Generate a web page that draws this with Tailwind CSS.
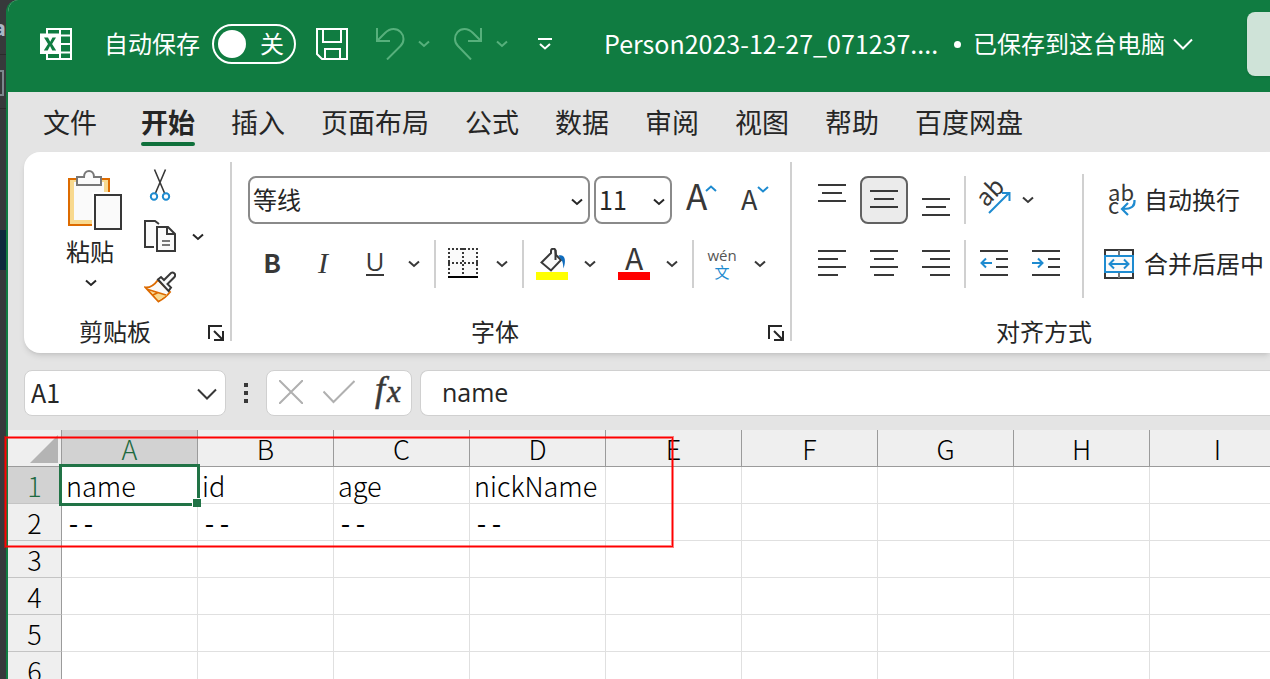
<!DOCTYPE html>
<html lang="zh-CN">
<head>
<meta charset="utf-8">
<title>Person2023-12-27 - Excel</title>
<script src="https://cdn.jsdelivr.net/npm/@tailwindcss/browser@4"></script>
</head>
<body class="relative flex h-screen overflow-hidden bg-[#37393b] font-['Open_Sans','Noto_Sans_CJK_SC',sans-serif] text-[#262626]">

<svg class="hidden" aria-hidden="true">
  <symbol id="chev" viewBox="0 0 12 8"><path d="M1 1.5 L6 6 L11 1.5" fill="none" stroke="currentColor" stroke-width="2"/></symbol>
  <symbol id="launch" viewBox="0 0 16 16"><path d="M1 14V1H14M6 6L14 14M15 6V15H6" fill="none" stroke="currentColor" stroke-width="2"/></symbol>
</svg>

<!-- Window behind -->
<aside class="w-[6px] shrink-0 overflow-hidden" aria-hidden="true">
  <div class="flex h-[54px] items-center justify-end text-[22px] font-bold text-[#a9b7c6]">a</div>
  <div class="h-px bg-[#2b2b2b]"></div>
  <div class="mt-[15px] h-[26px] w-[4px] border-2 border-l-0 border-[#7c878d]"></div>
  <div class="mt-3 h-px bg-[#2b2b2b]"></div>
  <div class="mt-[121px] h-10 bg-[#0d293e]"></div>
</aside>

<main class="flex min-w-0 flex-1 flex-col overflow-hidden rounded-tl-xl border-l-2 border-[#107c41] bg-[#e4e4e4]">

  <header class="flex h-[92px] shrink-0 items-center bg-[#107c41] pb-1 pl-8 text-[24px] text-white">
    <svg class="size-8 shrink-0" viewBox="0 0 32 32"><path d="M7 6V1H31V31H7V26M20 1V31M20 7.500H31M20 16H31M20 24.500H31M7 7.500H20M7 24.500H20" fill="none" stroke="#fff" stroke-width="2"/><path d="M0 5.500H20V26H0Z" fill="#fff"/><path d="M4 9.500H8L10.200 13.800L12.500 9.500H16L12.100 16L16.200 22.500H12.300L10 18L7.700 22.500H3.800L8 16Z" fill="#107c41"/></svg>
    <label for="autosave" class="ml-8 shrink-0 whitespace-nowrap">自动保存</label>
    <button id="autosave" role="switch" aria-checked="false" class="ml-3 flex h-10 w-[84px] shrink-0 items-center justify-between rounded-full border-2 border-white pr-[10px] pl-1"><span class="size-7 rounded-full bg-white"></span><span>关</span></button>
    <button aria-label="保存" class="ml-5 shrink-0"><svg class="size-8" viewBox="0 0 32 32" fill="none" stroke="#fff" stroke-width="2"><path d="M1 1H31V31H6L1 26ZM7 1V14H25V1M9 31V21H24V31"/></svg></button>
    <button aria-label="撤消" class="ml-7 shrink-0 text-[#57b07c]"><svg class="h-8 w-[29px]" viewBox="0 0 29 32" fill="none" stroke="currentColor" stroke-width="2"><path d="M1 0V13H14M1 13L9 5C12 2 15 1 17.500 1C23.500 1 27.500 6 27.500 11C27.500 14 26.500 16 24.500 18L11 31.500"/></svg></button>
    <button aria-label="撤消列表" class="ml-[13px] shrink-0 text-[#57b07c]"><svg class="h-2 w-3"><use href="#chev"/></svg></button>
    <button aria-label="恢复" class="ml-6 shrink-0 text-[#57b07c]"><svg class="h-8 w-[29px]" viewBox="0 0 29 32" fill="none" stroke="currentColor" stroke-width="2"><path d="M27 0V13H14M27 13L19 5C16 2 13 1 10.500 1C4.500 1 1 6 1 11C1 14 2 16 4 18L17 31.500"/></svg></button>
    <button aria-label="恢复列表" class="ml-[13px] shrink-0 text-[#57b07c]"><svg class="h-2 w-3"><use href="#chev"/></svg></button>
    <button aria-label="自定义快速访问工具栏" class="ml-[30px] shrink-0"><svg class="h-[14px] w-[14px]" viewBox="0 0 14 14" fill="none" stroke="#fff" stroke-width="2"><path d="M0 2H14M2 7L7 11.500L12 7"/></svg></button>
    <button class="ml-[52px] flex shrink-0 items-center whitespace-nowrap"><span class="w-[350px] pb-[2px] text-left font-['Noto_Sans_CJK_SC',sans-serif] text-[25px] leading-9">Person2023-12-27_071237....</span><span class="mr-3 size-[7px] rounded-full bg-white"></span><span>已保存到这台电脑</span><svg class="ml-2 h-3 w-5" viewBox="0 0 20 12" fill="none" stroke="#fff" stroke-width="2"><path d="M1 1.500L10 10.500L19 1.500"/></svg></button>
    <button aria-label="搜索" class="ml-auto h-16 w-[23px] shrink-0 rounded-l-lg bg-[#cfe3d8] shadow-sm"></button>
  </header>

  <nav class="flex h-[60px] shrink-0 items-center gap-9 pt-[2px] pl-[35px] text-[27px] whitespace-nowrap">
    <a href="#" class="mr-2">文件</a>
    <a href="#" aria-current="page" class="relative font-bold">开始<span class="absolute -bottom-[3px] left-0 h-1 w-full rounded-full bg-[#0f703b]"></span></a>
    <a href="#">插入</a><a href="#">页面布局</a><a href="#">公式</a><a href="#">数据</a><a href="#">审阅</a><a href="#">视图</a><a href="#">帮助</a><a href="#">百度网盘</a>
  </nav>

  <div class="ml-4 flex shrink-0 overflow-hidden rounded-l-2xl bg-white pb-[6px] text-[24px] text-[#262626] shadow-md">
    <!-- Clipboard -->
    <section class="flex w-[206px] shrink-0 flex-col">
      <div class="flex h-[165px] pl-9">
        <button class="flex w-[62px] flex-col items-center pt-4">
          <svg class="h-16 w-[62px] shrink-0" viewBox="0 0 62 64"><path d="M9 11H49V57H9Z" fill="#f8d98f" stroke="#dd6b00" stroke-width="2"/><path d="M14 14H44V52H14Z" fill="#fafafa"/><path d="M17 9H24C24 1 34 1 34 9H41V17H17Z" fill="#fafafa" stroke="#777" stroke-width="2"/><path d="M32 24H62V64H32Z" fill="#fff"/><path d="M35 27H61V61H35Z" fill="#fafafa" stroke="#383838" stroke-width="2"/></svg>
          <span class="pr-[2px] leading-10">粘贴</span>
          <svg class="mt-[7px] h-2 w-3 shrink-0"><use href="#chev"/></svg>
        </button>
        <div class="ml-[22px] flex flex-col pt-[7px]">
          <button aria-label="剪切" class="flex h-[51px] items-center"><svg class="h-8 w-8" viewBox="0 0 32 32" fill="none"><path d="M10.500 0.500L20.500 24M21.500 0.500L11.500 24" stroke="#383838" stroke-width="1.600"/><circle cx="10" cy="27.500" r="3.200" stroke="#1e8bd0" stroke-width="2"/><circle cx="22" cy="27.500" r="3.200" stroke="#1e8bd0" stroke-width="2"/></svg></button>
          <button aria-label="复制" class="flex h-[51px] items-center"><svg class="h-8 w-8" viewBox="0 0 32 32" fill="#fafafa" stroke="#383838" stroke-width="2"><path d="M10 27H1V1H11L15 4"/><path d="M13 7H24L31 14V31H13Z"/><path d="M23 7V14H31" fill="none"/><path d="M18 21H26M18 25H26" stroke="#777"/></svg></button>
          <button aria-label="格式刷" class="flex h-[51px] items-center"><svg class="h-8 w-8" viewBox="0 0 32 32"><path d="M1.500 16.500C7 17 11 13 14 9L26 21C23 25 19 28 14.500 30.500Z" fill="#fafafa" stroke="#dd6b00" stroke-width="2"/><path d="M6 20L23 24L14.500 29.500Z" fill="#f8d98f"/><path d="M4 18.500L22 24M9 24L14 21.500" stroke="#dd6b00" stroke-width="1.800"/><path d="M14 8.500L17 6L20 9L27 2C29 0.500 32.500 3 30.500 6L23.500 13L27 16.500L24.500 20Z" fill="#fafafa" stroke="#383838" stroke-width="2"/></svg></button>
        </div>
        <button aria-label="复制选项" class="mt-[67px] ml-4 flex h-9 items-center"><svg class="h-2 w-3"><use href="#chev"/></svg></button>
      </div>
      <div class="flex h-[30px] items-center"><h2 class="flex-1 pl-2 text-center">剪贴板</h2><button aria-label="剪贴板选项" class="flex w-8 justify-center pt-[2px] pl-1"><svg class="size-4"><use href="#launch"/></svg></button></div>
    </section>
    <div class="mt-[10px] h-[179px] w-[2px] shrink-0 bg-[#d0d0d0]"></div>

    <!-- Font -->
    <section class="flex w-[558px] shrink-0 flex-col">
      <div class="flex h-[165px] flex-col gap-4 pt-6 pl-4">
        <div class="flex h-12">
          <div class="relative w-[342px]"><select aria-label="字体" class="h-12 w-full appearance-none rounded-lg border-2 border-[#8a8a8a] bg-white pl-[3px]"><option>等线</option></select><svg class="pointer-events-none absolute top-[22px] right-[7px] h-2 w-3"><use href="#chev"/></svg></div>
          <div class="relative ml-1 w-[78px]"><select aria-label="字号" class="h-12 w-full appearance-none rounded-lg border-2 border-[#8a8a8a] bg-white pl-[3px] font-['Noto_Sans_CJK_SC',sans-serif] text-[25px]"><option>11</option></select><svg class="pointer-events-none absolute top-[22px] right-[7px] h-2 w-3"><use href="#chev"/></svg></div>
          <button aria-label="增大字号" class="ml-3"><svg class="h-12 w-9 overflow-visible" viewBox="0 0 36 48"><text x="2" y="34" font-size="35" font-family="Noto Sans CJK SC" fill="#383838">A</text><path d="M22 15L27 10.500L32 15" fill="none" stroke="#1e8bd0" stroke-width="2"/></svg></button>
          <button aria-label="减小字号" class="ml-[18px]"><svg class="h-12 w-9 overflow-visible" viewBox="0 0 36 48"><text x="3" y="34" font-size="27" font-family="Noto Sans CJK SC" fill="#383838">A</text><path d="M20 11L25 15.500L30 11" fill="none" stroke="#1e8bd0" stroke-width="2"/></svg></button>
        </div>
        <div class="flex h-12 items-center text-[#383838]">
          <button class="h-12 w-12 pb-1 font-['Noto_Sans_CJK_SC',sans-serif] text-[26px] leading-[44px] font-bold">B</button>
          <button class="h-12 w-[54px] pb-1 font-['Liberation_Serif',serif] text-[30px] italic">I</button>
          <button aria-label="下划线" class="flex w-[50px] justify-center"><svg class="h-12 w-6 overflow-visible" viewBox="0 0 24 48"><text x="12" y="31" font-size="26" text-anchor="middle" fill="#383838">U</text><path d="M3 35H21" stroke="#383838" stroke-width="2"/></svg></button>
          <button aria-label="下划线选项" class="flex h-12 w-7 items-center justify-center"><svg class="h-2 w-3"><use href="#chev"/></svg></button>
          <div class="ml-[6px] h-12 w-[2px] bg-[#d0d0d0]"></div>
          <button aria-label="边框" class="flex h-12 w-[54px] justify-center pt-2"><svg class="size-[30px]" viewBox="0 0 30 30"><path d="M0 0H30V30H0Z" fill="#fafafa"/><path d="M0 1H30M0 15H30M1 0V28M15 0V28M29 0V28" stroke="#383838" stroke-width="2" stroke-dasharray="2 2"/><path d="M0 29H30" stroke="#000" stroke-width="2"/></svg></button>
          <button aria-label="边框选项" class="flex h-12 w-6 items-center justify-center"><svg class="h-2 w-3"><use href="#chev"/></svg></button>
          <div class="ml-2 h-12 w-[2px] bg-[#d0d0d0]"></div>
          <button aria-label="填充颜色" class="flex w-14 justify-center"><svg class="size-8" viewBox="0 0 32 32"><path d="M5.500 14.500L15 5V3C15 0 19.500 0 19.500 3L20 7L25 12L15 22.500Z" fill="#fafafa" stroke="#383838" stroke-width="2"/><path d="M19.500 2V12" stroke="#383838" stroke-width="2"/><path d="M22.500 7.500C29 6 30.500 12 27.500 20.500C27 17 27 14 25.500 12Z" fill="#0f6cbd"/><path d="M0 24H32V32H0Z" fill="#ff0"/></svg></button>
          <button aria-label="填充颜色选项" class="flex h-12 w-5 items-center justify-center"><svg class="h-2 w-3"><use href="#chev"/></svg></button>
          <button aria-label="字体颜色" class="ml-[6px] flex w-14 justify-center"><svg class="size-8 overflow-visible" viewBox="0 0 32 32"><text x="16" y="22" text-anchor="middle" font-size="30" font-family="Noto Sans CJK SC" fill="#383838">A</text><path d="M0 24H32V32H0Z" fill="red"/></svg></button>
          <button aria-label="字体颜色选项" class="flex h-12 w-5 items-center justify-center"><svg class="h-2 w-3"><use href="#chev"/></svg></button>
          <div class="ml-[10px] h-12 w-[2px] bg-[#d0d0d0]"></div>
          <button aria-label="拼音指南" class="flex w-14 flex-col items-center"><span class="text-[15px] leading-[16px] text-[#555]">wén</span><span class="text-[15px] leading-[18px] text-[#1e8bd0]">文</span></button>
          <button aria-label="拼音选项" class="flex h-12 w-5 items-center justify-center"><svg class="h-2 w-3"><use href="#chev"/></svg></button>
        </div>
      </div>
      <div class="flex h-[30px] items-center"><h2 class="flex-1 text-center">字体</h2><button aria-label="字体设置" class="flex w-8 justify-center pt-[2px] pl-1"><svg class="size-4"><use href="#launch"/></svg></button></div>
    </section>
    <div class="mt-[10px] h-[179px] w-[2px] shrink-0 bg-[#d0d0d0]"></div>

    <!-- Alignment -->
    <section class="flex w-[504px] shrink-0 flex-col">
      <div class="flex h-[165px] pl-4">
        <div class="flex w-[274px] shrink-0 flex-col gap-4 pt-6 text-[#383838]">
          <div class="flex h-12 gap-1">
            <button aria-label="顶端对齐" class="flex w-12 items-center justify-center"><svg class="h-12 w-7" viewBox="0 0 28 48" stroke="currentColor" stroke-width="2"><path d="M0 9H28M4 17H24M0 25H28"/></svg></button>
            <button aria-label="垂直居中" aria-pressed="true" class="flex w-12 items-center justify-center rounded-lg border-2 border-[#616161] bg-[#ebebeb]"><svg class="h-11 w-7" viewBox="0 0 28 44" stroke="currentColor" stroke-width="2"><path d="M0 13H28M4 21H24M0 29H28"/></svg></button>
            <button aria-label="底端对齐" class="flex w-12 items-center justify-center"><svg class="h-12 w-7" viewBox="0 0 28 48" stroke="currentColor" stroke-width="2"><path d="M0 23H28M4 31H24M0 39H28"/></svg></button>
            <div class="h-12 w-[2px] bg-[#d0d0d0]"></div>
            <div class="flex"><button aria-label="方向" class="flex w-12 items-center justify-center"><svg class="h-12 w-9 overflow-visible" viewBox="0 0 36 48"><text x="10" y="32" font-size="24" font-family="Noto Sans CJK SC" fill="#383838" transform="rotate(-45 10 32)">ab</text><path d="M13 37L33 17M26 17H33.500V25" fill="none" stroke="#1e8bd0" stroke-width="2"/></svg></button><button aria-label="方向选项" class="flex w-5 items-center justify-center"><svg class="h-2 w-3"><use href="#chev"/></svg></button></div>
          </div>
          <div class="flex h-12 gap-1">
            <button aria-label="左对齐" class="flex w-12 items-center justify-center"><svg class="h-12 w-7" viewBox="0 0 28 48" stroke="currentColor" stroke-width="2"><path d="M0 11H28M0 19H20M0 27H28M0 35H20"/></svg></button>
            <button aria-label="居中" class="flex w-12 items-center justify-center"><svg class="h-12 w-7" viewBox="0 0 28 48" stroke="currentColor" stroke-width="2"><path d="M0 11H28M4 19H24M0 27H28M4 35H24"/></svg></button>
            <button aria-label="右对齐" class="flex w-12 items-center justify-center"><svg class="h-12 w-7" viewBox="0 0 28 48" stroke="currentColor" stroke-width="2"><path d="M0 11H28M8 19H28M0 27H28M8 35H28"/></svg></button>
            <div class="h-12 w-[2px] bg-[#d0d0d0]"></div>
            <button aria-label="减少缩进量" class="flex w-12 items-center justify-center"><svg class="h-12 w-7" viewBox="0 0 28 48" fill="none" stroke="currentColor" stroke-width="2"><path d="M0 11H28M16 19H28M16 27H28M0 35H28"/><path d="M12 23H1M6 18.500L1.500 23L6 27.500" stroke="#1e8bd0"/></svg></button>
            <button aria-label="增加缩进量" class="flex w-12 items-center justify-center"><svg class="h-12 w-7" viewBox="0 0 28 48" fill="none" stroke="currentColor" stroke-width="2"><path d="M0 11H28M16 19H28M16 27H28M0 35H28"/><path d="M0 23H11M6 18.500L10.500 23L6 27.500" stroke="#1e8bd0"/></svg></button>
          </div>
        </div>
        <div class="mt-[22px] h-[124px] w-[2px] shrink-0 bg-[#d0d0d0]"></div>
        <div class="ml-5 flex shrink-0 flex-col gap-4 pt-6">
          <button class="flex h-12 items-center gap-2 whitespace-nowrap"><svg class="h-12 w-8 overflow-visible" viewBox="0 0 32 48"><text x="4" y="25" font-size="22" font-family="Noto Sans CJK SC" fill="#383838">ab</text><text x="4" y="38" font-size="22" font-family="Noto Sans CJK SC" fill="#383838">c</text><path d="M30.500 24C31 30 28 33 19 33M24 27L18 33L24 39" fill="none" stroke="#1e8bd0" stroke-width="2.200"/></svg>自动换行</button>
          <button class="flex h-12 items-center gap-[10px] whitespace-nowrap"><svg class="size-[30px]" viewBox="0 0 30 30" fill="none"><path d="M1 1H29V29H1Z" stroke="#383838" stroke-width="2"/><path d="M15 1V29" stroke="#777" stroke-width="2"/><path d="M1 7H29V23H1Z" fill="#fafafa" stroke="#1e8bd0" stroke-width="2"/><path d="M5 15H25M10 10.500L5.500 15L10 19.500M20 10.500L24.500 15L20 19.500" stroke="#1e8bd0" stroke-width="2"/></svg>合并后居中</button>
        </div>
      </div>
      <div class="flex h-[30px] items-center"><h2 class="flex-1 text-center">对齐方式</h2></div>
    </section>
  </div>

  <!-- Formula bar -->
  <div class="mt-[17px] flex h-[46px] shrink-0 pl-4 text-[25px]">
    <div class="relative w-[202px] shrink-0"><input aria-label="名称框" value="A1" class="h-full w-full rounded-lg border border-[#d0d0d0] bg-white pb-[2px] pl-[6px] font-['Noto_Sans_CJK_SC',sans-serif]"><svg class="pointer-events-none absolute top-[18px] right-[9px] h-3 w-5" viewBox="0 0 20 12" fill="none" stroke="#383838" stroke-width="2"><path d="M1 1.500L10 10.500L19 1.500"/></svg></div>
    <div class="ml-[18px] flex w-1 shrink-0 flex-col justify-center gap-1"><span class="h-1 bg-[#383838]"></span><span class="h-1 bg-[#383838]"></span><span class="h-1 bg-[#383838]"></span></div>
    <div class="ml-[18px] flex w-[146px] shrink-0 items-center gap-5 rounded-lg border border-[#d0d0d0] bg-white pb-[2px] pl-3">
      <button aria-label="取消"><svg class="size-6" viewBox="0 0 24 24" stroke="#b0b0b0" stroke-width="2"><path d="M0 0L24 24M24 0L0 24"/></svg></button>
      <button aria-label="输入"><svg class="h-6 w-8" viewBox="0 0 32 24" fill="none" stroke="#b0b0b0" stroke-width="2"><path d="M0.500 11.500L10.500 22L31.500 1"/></svg></button>
      <button aria-label="插入函数" class="-ml-1"><svg class="h-10 w-8 overflow-visible" viewBox="0 0 32 40" fill="#383838" stroke="#383838" stroke-width="0.500" font-family="Liberation Serif" font-style="italic"><text x="4" y="29" font-size="36">f</text><text x="16" y="30" font-size="31">x</text></svg></button>
    </div>
    <input aria-label="编辑栏" value="name" class="ml-2 min-w-0 flex-1 rounded-l-lg border border-r-0 border-[#d0d0d0] bg-white pl-[21px]">
  </div>

  <!-- Sheet -->
  <div class="mt-[14px] min-h-0 flex-1 overflow-hidden bg-white">
    <table class="w-[1278px] table-fixed border-separate border-spacing-0 font-['Noto_Sans_CJK_SC',sans-serif] text-[27px] leading-[34px] font-light text-black [&_td]:border-r [&_td]:border-b [&_td]:border-[#e0e0e0] [&_td]:p-0 [&_td]:pt-[2px] [&_td]:pl-1 [&_th]:border-r [&_th]:border-b [&_th]:p-0 [&_th]:pt-[2px] [&_th]:font-light [&_tr]:h-[37px]">
      <thead><tr class="bg-[#efefef] [&_th]:border-[#9b9b9b]">
        <th class="w-[54px]"><svg class="ml-auto mr-[3px] h-7 w-7" viewBox="0 0 28 28"><path d="M28 0V28H0Z" fill="#b4b4b4"/></svg></th>
        <th class="bg-[#d2d2d2] text-[#1e6a41]">A</th><th>B</th><th>C</th><th>D</th><th>E</th><th>F</th><th>G</th><th>H</th><th>I</th>
      </tr></thead>
      <tbody class="[&_th]:border-r-[#9b9b9b] [&_th]:border-b-[#c4c4c4] [&_th]:bg-[#efefef]">
        <tr><th class="bg-[#d2d2d2]! text-[#1e6a41]">1</th><td class="relative">name<span class="absolute -top-[3px] -right-[3px] -bottom-[3px] -left-[3px] border-3 border-[#217346]"><span class="absolute -right-1 -bottom-1 size-[9px] border-t border-l border-white bg-[#217346]"></span></span></td><td>id</td><td>age</td><td>nickName</td><td></td><td></td><td></td><td></td><td></td></tr>
        <tr class="[&_td]:pt-[10px]! [&_td]:font-['Liberation_Mono',monospace] [&_td]:text-[25px] [&_td]:leading-[26px]"><th>2</th><td>--</td><td>--</td><td>--</td><td>--</td><td></td><td></td><td></td><td></td><td></td></tr>
        <tr><th>3</th><td></td><td></td><td></td><td></td><td></td><td></td><td></td><td></td><td></td></tr>
        <tr><th>4</th><td></td><td></td><td></td><td></td><td></td><td></td><td></td><td></td><td></td></tr>
        <tr><th>5</th><td></td><td></td><td></td><td></td><td></td><td></td><td></td><td></td><td></td></tr>
        <tr><th>6</th><td></td><td></td><td></td><td></td><td></td><td></td><td></td><td></td><td></td></tr>
      </tbody>
    </table>
  </div>
</main>

<!-- Highlight frame over the exported rows -->
<div class="pointer-events-none absolute top-[437px] left-[5px] h-[110px] w-[668px] border border-[#ff0000] ring-1 inset-ring-1 ring-[#ff0000]/50 inset-ring-[#ff0000]/50"></div>
</body>
</html>
